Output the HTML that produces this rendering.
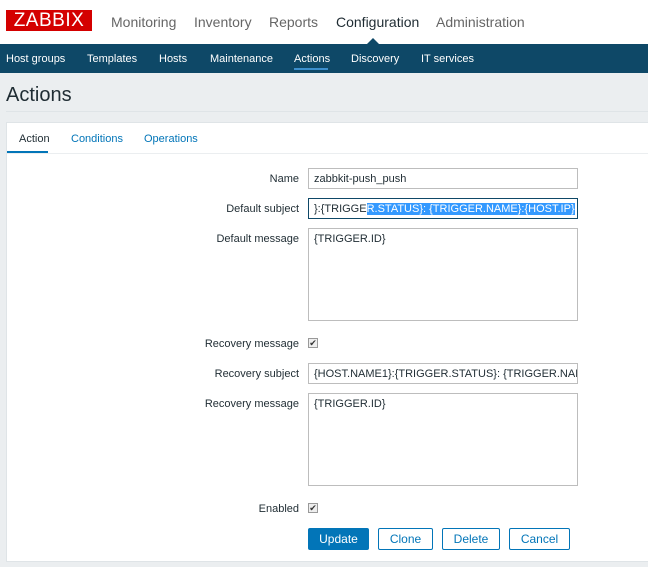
<!DOCTYPE html><html><head><style>
*{margin:0;padding:0;box-sizing:border-box}
body{width:648px;height:567px;overflow:hidden;background:#ebeef0;font-family:"Liberation Sans",sans-serif;font-size:11px;color:#1f2c33;position:relative}
.a{position:absolute}
.top{left:0;top:0;width:648px;height:44px;background:#fff}
.logo{left:6px;top:10px;width:86px;height:21px;background:#d40000;color:#fff;font-size:19px;line-height:21px;text-align:center;letter-spacing:0.5px}
.mm{top:14px;font-size:14px;color:#666}
.nav{left:0;top:44px;width:648px;height:29px;background:#0e4867}
.nv{top:53px;color:#fff;font-size:11px}
.panel{left:6px;top:122px;width:650px;height:440px;background:#fff;border:1px solid #dfe4e7}
.lbl{width:200px;text-align:right;left:99px;color:#1f2c33}
.in{left:308px;width:270px;border:1px solid #bdbdbd;background:#fff;padding:0 5px;line-height:20px;font-size:11px;white-space:nowrap;overflow:hidden}
.cb{left:308px;width:10px;height:10px;border:1px solid #999;background:#eee;font-size:9px;line-height:8px;text-align:center;color:#333}
.btn{top:528px;height:22px;border:1px solid #0275b8;color:#0275b8;font-size:12px;line-height:20px;text-align:center;border-radius:2px;background:#fff}
</style></head><body>
<div class="a top"></div>
<div class="a logo">ZABBIX</div>
<div class="a mm" style="left:111px">Monitoring</div>
<div class="a mm" style="left:194px">Inventory</div>
<div class="a mm" style="left:269px">Reports</div>
<div class="a mm" style="left:336px;color:#1f2c33">Configuration</div>
<div class="a mm" style="left:436px">Administration</div>
<div class="a nav"></div>
<div class="a" style="left:367px;top:38px;width:0;height:0;border-left:6px solid transparent;border-right:6px solid transparent;border-bottom:6px solid #0e4867"></div>
<div class="a nv" style="left:6px">Host groups</div>
<div class="a nv" style="left:87px">Templates</div>
<div class="a nv" style="left:159px">Hosts</div>
<div class="a nv" style="left:210px">Maintenance</div>
<div class="a nv" style="left:294px">Actions</div>
<div class="a" style="left:294px;top:68px;width:34px;height:2px;background:#3c8fcd"></div>
<div class="a nv" style="left:351px">Discovery</div>
<div class="a nv" style="left:421px">IT services</div>
<div class="a" style="left:6px;top:84px;font-size:20px;color:#1f2c33">Actions</div>
<div class="a" style="left:6px;top:111px;width:642px;height:1px;background:#dfe4e7"></div>
<div class="a panel"></div>
<div class="a" style="left:19px;top:133px">Action</div>
<div class="a" style="left:71px;top:133px;color:#0275b8">Conditions</div>
<div class="a" style="left:144px;top:133px;color:#0275b8">Operations</div>
<div class="a" style="left:7px;top:151px;width:41px;height:2px;background:#0275b8"></div>
<div class="a" style="left:7px;top:153px;width:641px;height:1px;background:#ebeef0"></div>
<div class="a lbl" style="top:173px">Name</div>
<div class="a in" style="top:168px;height:21px">zabbkit-push_push</div>
<div class="a lbl" style="top:203px">Default subject</div>
<div class="a in" style="top:198px;height:21px;border-color:#0e4867">}:{TRIGGE<span style="background:#3399ff;color:#fff">R.STATUS}: {TRIGGER.NAME}:{HOST.IP}</span></div>
<div class="a lbl" style="top:233px">Default message</div>
<div class="a in" style="top:228px;height:93px">{TRIGGER.ID}</div>
<div class="a lbl" style="top:338px">Recovery message</div>
<div class="a cb" style="top:338px">✔</div>
<div class="a lbl" style="top:368px">Recovery subject</div>
<div class="a in" style="top:363px;height:21px">{HOST.NAME1}:{TRIGGER.STATUS}: {TRIGGER.NAME}</div>
<div class="a lbl" style="top:398px">Recovery message</div>
<div class="a in" style="top:393px;height:93px">{TRIGGER.ID}</div>
<div class="a lbl" style="top:503px">Enabled</div>
<div class="a cb" style="top:503px">✔</div>
<div class="a btn" style="left:308px;width:61px;background:#0275b8;color:#fff">Update</div>
<div class="a btn" style="left:378px;width:55px">Clone</div>
<div class="a btn" style="left:442px;width:58px">Delete</div>
<div class="a btn" style="left:509px;width:61px">Cancel</div>
</body></html>
